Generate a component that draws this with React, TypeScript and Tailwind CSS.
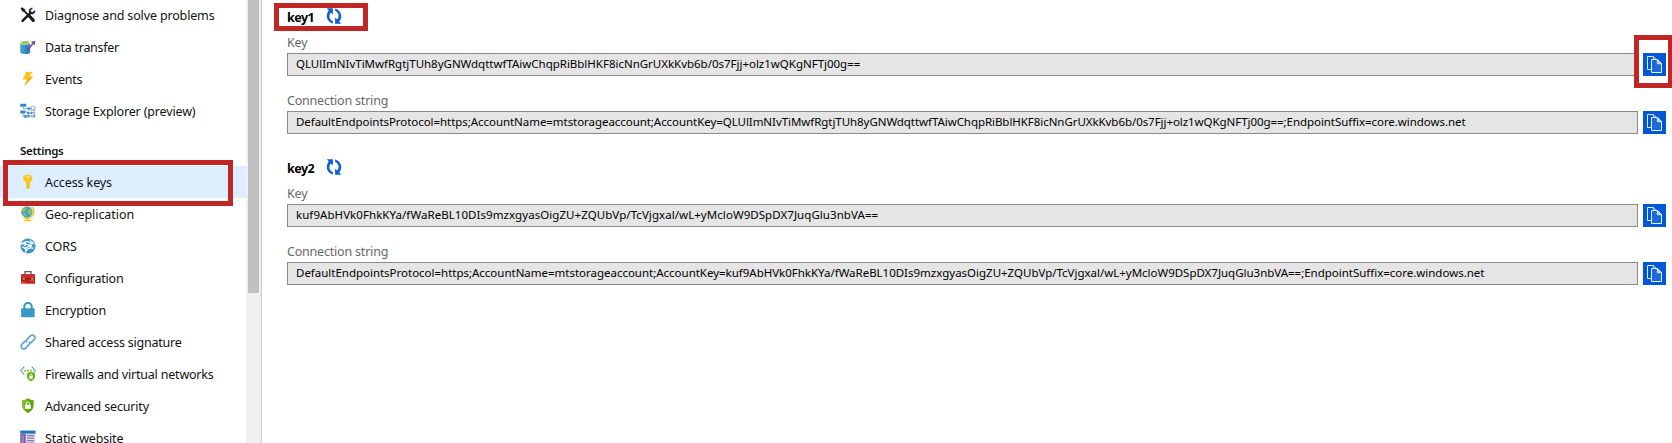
import type { ReactNode } from 'react';

function Icon({ children }: { children: ReactNode }) {
  return (
    <svg width="16" height="16" viewBox="0 0 16 16" fill="none" className="shrink-0">
      {children}
    </svg>
  );
}

const ToolsIcon = () => (
  <Icon>
    <path d="M2.5 13.8 9.8 6.6" stroke="#1a1a1a" strokeWidth="2.5" strokeLinecap="round" />
    <path d="M14.9 3.3 12.7 5.2 10.8 4.9 10.6 3.1 12.7 1.1C10.8.5 8.9 1.9 9 4.2c0 2 1.9 3.3 3.7 2.8 1.8-.4 2.7-2.1 2.2-3.7z" fill="#1a1a1a" stroke="#1a1a1a" strokeWidth=".4" />
    <path d="M.8 1.6 2.2.5 4.9 2.4 5.1 3.7 8.2 6.9 7.1 8 4 4.8 2.7 4.5z" fill="#1a1a1a" stroke="#1a1a1a" strokeWidth=".4" />
    <path d="m9.600 9.300 3.700 4.100" stroke="#1a1a1a" strokeWidth="3.200" strokeLinecap="round" />
  </Icon>
);

const DataTransferIcon = () => (
  <Icon>
    <path d="M.3 3.500v9.400c0 1.300 2.200 2.200 4.900 2.200s4.900-.9 4.900-2.200V3.500z" fill="#3e9cc9" />
    <path d="M5.200 5.500h4.900v7.400c0 1.300-2.200 2.200-4.900 2.200z" fill="#2f86b5" />
    <ellipse cx="5.200" cy="3.500" rx="4.900" ry="2.200" fill="#e9f4d5" />
    <ellipse cx="5.200" cy="3.500" rx="3.900" ry="1.600" fill="#9bcb48" />
    <path d="m8.300 10 5.200-6" stroke="#804998" strokeWidth="1.500" />
    <path d="M11 2.800 15.300 1.800 14.800 6.300z" fill="#804998" />
    <circle cx="8.300" cy="10" r="1.300" fill="#804998" />
  </Icon>
);

const EventsIcon = () => (
  <Icon>
    <path d="M6.300.8h6.400L9.300 5.700h3.800L4.200 14.900 6.900 8.500H2.600z" fill="#fcc419" />
    <path d="M9.300 5.700h3.800L4.200 14.900 7.800 8.300z" fill="#f6ad1b" />
  </Icon>
);

const StorageExplorerIcon = () => (
  <Icon>
    <path d="M.3.700h6v3h-6zM7.300 4.500h4v2.300h-4zM.3 7.600h5v3h-5zM4 12h3v2.800H4z" fill="#3286c4" />
    <path d="M3.500 3.700v2H7M3 10.600v2.800h2M5 9h2" stroke="#8ba3b3" />
    <path d="M7 7.800h3v6.700H5.800v-3H7zM10.500 5.500h4.700v9h-4.700z" fill="#9db1bf" />
    <path d="M11.200 3.300h3.900v3h-3.900z" fill="#e8ecef" stroke="#a5b1ba" strokeWidth=".7" />
    <path d="M7.500 9h2.200v2H7.500zM10.800 9h1.800v2h-1.800zM7.500 12h2.200v2H7.500zM13.200 12h1.600v2h-1.600z" fill="#3286c4" />
    <path d="M10.200 6v8.500M12.900 4v10.500M7 8.500h8.200M7 11.500h8.200" stroke="#fff" strokeWidth=".6" />
  </Icon>
);

const KeyIcon = () => (
  <Icon>
    <path
      fillRule="evenodd"
      d="M5.600.700h4.200l2.400 2.100v3.300L10 8.400v5L8 15.300l-2-1.600v-1.300l.8-.8-.8-.9V8.400L3.200 6.100V2.800zm.7 1.500v1.300h3V2.200z"
      fill="#fbc91b"
    />
    <path d="M8 8v6.500" stroke="#f0b81c" strokeWidth=".7" />
  </Icon>
);

const GlobeIcon = () => (
  <Icon>
    <path d="M11.300.7c3 1.700 3.600 6.700.6 9.600-2.100 2.100-5.600 2.600-8.300 1" stroke="#f4c525" strokeWidth="1.500" />
    <path d="M7.600 12v2.200M4 14.500h7.200" stroke="#f4c525" strokeWidth="1.600" />
    <circle cx="6.900" cy="6" r="5.700" fill="#46a1c9" />
    <path d="M3.200 2.100 6.500.9l1.300 1.300-2 1.500-.3 1.700-2.200.9-1.800-.8zM8.500 3.400l2.500-.8 1.300 2.700-1 3-2 .9-.8-2-1.400-1.200zM3.300 7.200l2.600.9.4 2.700-2.600-.7z" fill="#8cc063" />
  </Icon>
);

const CorsIcon = () => (
  <Icon>
    <circle cx="8" cy="8" r="7.500" fill="#3595c8" />
    <path d="M1 6c3-.8 4-2.600 6.300-2.400 2.100.2 2.500 1.700 7 2M5.700 14.600C5.200 12.500 9 8.500 13.500 10.300M2.200 9c2.600 0 2.600 2.300 4.300 3" stroke="#fff" strokeWidth="1.300" />
    <path d="m5 6.200 5.400 1.300-5 2.800" stroke="#fff" strokeWidth="1.100" />
    <circle cx="5.100" cy="6.300" r="1.500" fill="#fff" />
    <circle cx="10.500" cy="7.600" r="1.600" fill="#fff" />
    <circle cx="5.400" cy="10.300" r="1.100" fill="#fff" />
    <path d="m10 1.500 1 2.200 2.300.4" stroke="#fff" />
  </Icon>
);

const ToolboxIcon = () => (
  <Icon>
    <path d="M5 4.500V1.600h6v2.900" stroke="#5c5c5c" strokeWidth="1.300" />
    <path d="M1 4.300h14v9.400H1z" fill="#bf1f24" />
    <path d="M1 4.300h14v3.500H1z" fill="#cf2b2b" />
    <path d="M1 8.700h14" stroke="#8c1519" />
    <path d="M2.700 7.800h2v1.900h-2zM11.300 7.800h2v1.900h-2z" fill="#e58a45" />
    <path d="M1 12.700h5M10 10.900h4" stroke="#e77749" strokeWidth=".8" />
  </Icon>
);

const LockIcon = () => (
  <Icon>
    <path d="M4.300 7V4.600a3.700 3.700 0 0 1 7.400 0V7" stroke="#3999c6" strokeWidth="2" />
    <rect x="1.100" y="6.200" width="13.600" height="9" rx=".8" fill="#3999c6" />
  </Icon>
);

const LinkIcon = () => (
  <Icon>
    <g stroke="#5ba3d0" strokeWidth="1.600" transform="rotate(-45 8 8)">
      <path d="M7.400 5.400H2a2.600 2.600 0 0 0 0 5.200h4.500a2.600 2.600 0 0 0 2.500-2" />
      <path d="M8.600 10.600H14a2.600 2.600 0 0 0 0-5.200H9.500a2.600 2.600 0 0 0-2.500 2" />
    </g>
  </Icon>
);

const FirewallIcon = () => (
  <Icon>
    <path d="M4.200.600.800 4.600l3.400 4M11.800.600l3.400 4-1.500 1.800" stroke="#5294bd" strokeWidth="1.300" strokeDasharray="1.700 .5" />
    <path d="M4.300 4.600h7.600" stroke="#7fba00" strokeWidth="1.700" strokeDasharray="1.700 1.200" />
    <path d="m11 6 3.900 1v3.800c0 2-1.900 3.500-3.900 4.500-2-1-3.900-2.500-3.900-4.500V7z" fill="#65ad14" />
    <path d="M9.300 10h3.400v2.800H9.300z" fill="#fff" />
    <path d="M10 10V9a1 1 0 0 1 2 0v1" stroke="#fff" strokeWidth=".8" />
  </Icon>
);

const ShieldIcon = () => (
  <Icon>
    <path d="M8 .3C9.800 1.700 11.600 2 13.600 2v5.400c0 3.700-2.800 6-5.600 7.700C5.200 13.400 2.400 11.100 2.400 7.400V2C4.400 2 6.200 1.700 8 .3z" fill="#5ea50c" />
    <path d="M8 .3C6.200 1.700 4.400 2 2.400 2v5.400c0 2.400 1.200 4.200 2.800 5.600z" fill="#7fba22" />
    <path d="M5.200 6.800h5.600v4.100H5.200z" fill="#fff" />
    <path d="M6.400 7V5.600a1.600 1.600 0 0 1 3.200 0V7" stroke="#fff" />
  </Icon>
);

const WebsiteIcon = () => (
  <Icon>
    <path d="M.3.600h15.200v14.800H.3z" fill="#d9dde8" />
    <path d="M.3.600h15.200v3H.3z" fill="#1c76bc" />
    <path d="M.3 3.600h5.500v11.800H.3z" fill="#8661ab" />
    <path d="M2.400 5.600h1.300v7.600H2.400z" fill="#ad92c8" />
    <path d="M7 5.700h7M7 8.200h7M7 10.700h7M7 13.200h7" stroke="#8d72b2" strokeWidth="1.200" />
  </Icon>
);

const RegenerateIcon = () => (
  <Icon>
    <g fill="#1160d2">
      <path d="M.7.300h6.200v6.200L4.900 4.500C2.400 7.300 3.100 11.400 6.900 13.200v2.300C.8 13.700-1.100 7.400 2.800 2.400z" />
      <path d="M15.300 15.700H9.100V9.500l2 2c2.500-2.800 1.800-6.900-2-8.700V.5c6.100 1.800 8 8.100 4.100 13.100z" />
    </g>
  </Icon>
);

function CopyButton() {
  return (
    <button aria-label="Copy" className="ml-[5px] size-[23px] shrink-0 bg-[#0058d6]">
      <svg width="23" height="23" viewBox="0 0 23 23" fill="none">
        <path d="M4.500 3.500h5.800l3.700 3.500v9.500H4.500z" stroke="#dcebff" />
        <path d="M10.300 3.500v3.800H14" stroke="#dcebff" strokeWidth=".8" />
        <path d="M8.500 6.500h6.200l3.800 4v9h-10z" fill="#1d69d8" stroke="#e6f1ff" />
        <path d="M14.300 6.500v4.300h4.200z" fill="#a9ccf7" stroke="#e6f1ff" strokeWidth=".8" />
      </svg>
    </button>
  );
}

function NavItem({ icon, label, active = false, spacing }: { icon: ReactNode; label: string; active?: boolean; spacing: string }) {
  return (
    <a className={`flex h-8 shrink-0 items-center gap-[9px] pl-5 text-[12.5px] whitespace-nowrap ${spacing} ${active ? 'bg-[#dceeff]' : ''}`}>
      {icon}
      <span className="pt-[2px] leading-5">{label}</span>
    </a>
  );
}

function Field({ label, value, spacing, labelHeight }: { label: string; value: string; spacing: string; labelHeight: string }) {
  return (
    <div>
      <div className={`flex items-end pb-px text-[12.5px] leading-[18px] tracking-[-0.2px] text-[#686868] ${labelHeight}`}>{label}</div>
      <div className="flex">
        <div className={`h-[23px] w-[1351px] shrink-0 border border-[#8a8a8a] bg-[#e5e5e5] pl-2 text-[11.5px] leading-[20px] whitespace-nowrap ${spacing}`}>
          {value}
        </div>
        <CopyButton />
      </div>
    </div>
  );
}

function KeySection({ name, keyValue, keySpacing, connection, connectionSpacing }: { name: string; keyValue: string; keySpacing: string; connection: string; connectionSpacing: string }) {
  return (
    <section className="mb-[23px]">
      <div className="flex h-[22px] gap-3">
        <h2 className="w-[27px] text-[12.5px] leading-[23px] font-bold tracking-[-0.5px]">{name}</h2>
        <div className="pt-[2px]">
          <RegenerateIcon />
        </div>
      </div>
      <Field label="Key" value={keyValue} spacing={keySpacing} labelHeight="h-[25px]" />
      <Field label="Connection string" value={connection} spacing={connectionSpacing} labelHeight="h-[35px]" />
    </section>
  );
}

const KEY1 = 'QLUlImNIvTiMwfRgtjTUh8yGNWdqttwfTAiwChqpRiBblHKF8icNnGrUXkKvb6b/0s7Fjj+olz1wQKgNFTj00g==';
const KEY2 = 'kuf9AbHVk0FhkKYa/fWaReBL10DIs9mzxgyasOigZU+ZQUbVp/TcVjgxal/wL+yMcloW9DSpDX7JuqGlu3nbVA==';
const connectionFor = (key: string) =>
  `DefaultEndpointsProtocol=https;AccountName=mtstorageaccount;AccountKey=${key};EndpointSuffix=core.windows.net`;

export default function App() {
  return (
    <div className="relative flex h-[443px] w-[1672px] overflow-hidden bg-white font-['Noto_Sans','Open_Sans',sans-serif] text-black">
      <nav className="-mt-px flex w-[246px] shrink-0 flex-col text-[#111]">
        <NavItem icon={<ToolsIcon />} label="Diagnose and solve problems" spacing="tracking-[-0.15px]" />
        <NavItem icon={<DataTransferIcon />} label="Data transfer" spacing="tracking-[-0.28px]" />
        <NavItem icon={<EventsIcon />} label="Events" spacing="tracking-[-0.2px]" />
        <NavItem icon={<StorageExplorerIcon />} label="Storage Explorer (preview)" spacing="tracking-[-0.15px]" />
        <h3 className="h-[39px] shrink-0 pl-5 text-[11.5px] leading-[47px] font-semibold tracking-[-0.3px]">Settings</h3>
        <NavItem icon={<KeyIcon />} label="Access keys" spacing="tracking-[-0.1px]" active />
        <NavItem icon={<GlobeIcon />} label="Geo-replication" spacing="tracking-[-0.05px]" />
        <NavItem icon={<CorsIcon />} label="CORS" spacing="tracking-[-0.1px]" />
        <NavItem icon={<ToolboxIcon />} label="Configuration" spacing="tracking-[-0.2px]" />
        <NavItem icon={<LockIcon />} label="Encryption" spacing="tracking-[-0.2px]" />
        <NavItem icon={<LinkIcon />} label="Shared access signature" spacing="tracking-[-0.22px]" />
        <NavItem icon={<FirewallIcon />} label="Firewalls and virtual networks" spacing="tracking-[-0.2px]" />
        <NavItem icon={<ShieldIcon />} label="Advanced security" spacing="tracking-[-0.17px]" />
        <NavItem icon={<WebsiteIcon />} label="Static website" spacing="tracking-[-0.17px]" />
      </nav>
      <div className="w-[15px] shrink-0 bg-[#f0f0f0] pl-[2px]">
        <div className="h-[293px] w-[11px] bg-[#c1c1c1]" />
      </div>
      <main className="flex-1 border-l border-[#c9c9c9] pt-1.5 pl-[25px]">
        <KeySection
          name="key1"
          keyValue={KEY1}
          keySpacing="tracking-[-0.015px]"
          connection={connectionFor(KEY1)}
          connectionSpacing="tracking-[-0.055px]"
        />
        <KeySection
          name="key2"
          keyValue={KEY2}
          keySpacing="tracking-[0.06px]"
          connection={connectionFor(KEY2)}
          connectionSpacing="tracking-[-0.015px]"
        />
      </main>
      <div className="absolute top-[160px] left-[3px] h-[46px] w-[230px] border-5 border-[#c02626]" />
      <div className="absolute top-[3px] left-[274px] h-[28px] w-[94px] border-5 border-[#c02626]" />
      <div className="absolute top-[35px] left-[1634px] h-[53px] w-[38px] border-5 border-r-4 border-[#c02626]" />
    </div>
  );
}
